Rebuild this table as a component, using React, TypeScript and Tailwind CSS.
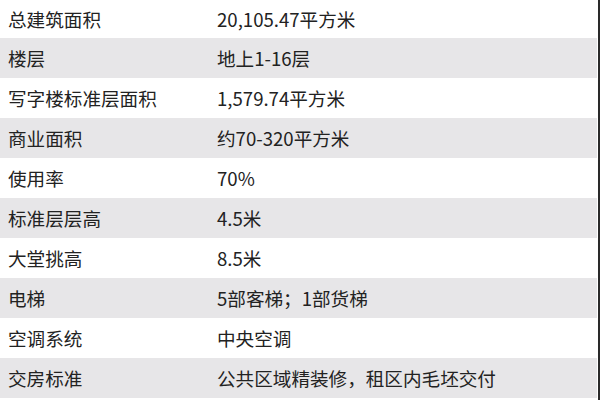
import React from "react";

const rows: [string, string][] = [
  ["总建筑面积", "20,105.47平方米"],
  ["楼层", "地上1-16层"],
  ["写字楼标准层面积", "1,579.74平方米"],
  ["商业面积", "约70-320平方米"],
  ["使用率", "70%"],
  ["标准层层高", "4.5米"],
  ["大堂挑高", "8.5米"],
  ["电梯", "5部客梯；1部货梯"],
  ["空调系统", "中央空调"],
  ["交房标准", "公共区域精装修，租区内毛坯交付"],
];

export default function App() {
  return (
    <div
      className="w-[600px] h-[400px] overflow-hidden bg-white flex"
      style={{ fontFamily: '"Noto Sans CJK SC", "Noto Sans", sans-serif' }}
    >
      <div className="flex-1 flex flex-col">
        {rows.map(([k, v], i) => (
          <div
            key={i}
            className={`flex items-center shrink-0 text-[18.6px] text-[#222222] ${
              i === 0 ? "h-[38px]" : "h-[40px]"
            } ${i % 2 === 1 ? "bg-[#e7e6e8]" : "bg-white"}`}
          >
            <div className="w-[217px] pl-[8px] shrink-0">{k}</div>
            <div className="flex-1">{v}</div>
          </div>
        ))}
      </div>
      <div className="w-[1px] bg-white" />
      <div className="w-[2px] bg-[#2a2a2a]" />
    </div>
  );
}
